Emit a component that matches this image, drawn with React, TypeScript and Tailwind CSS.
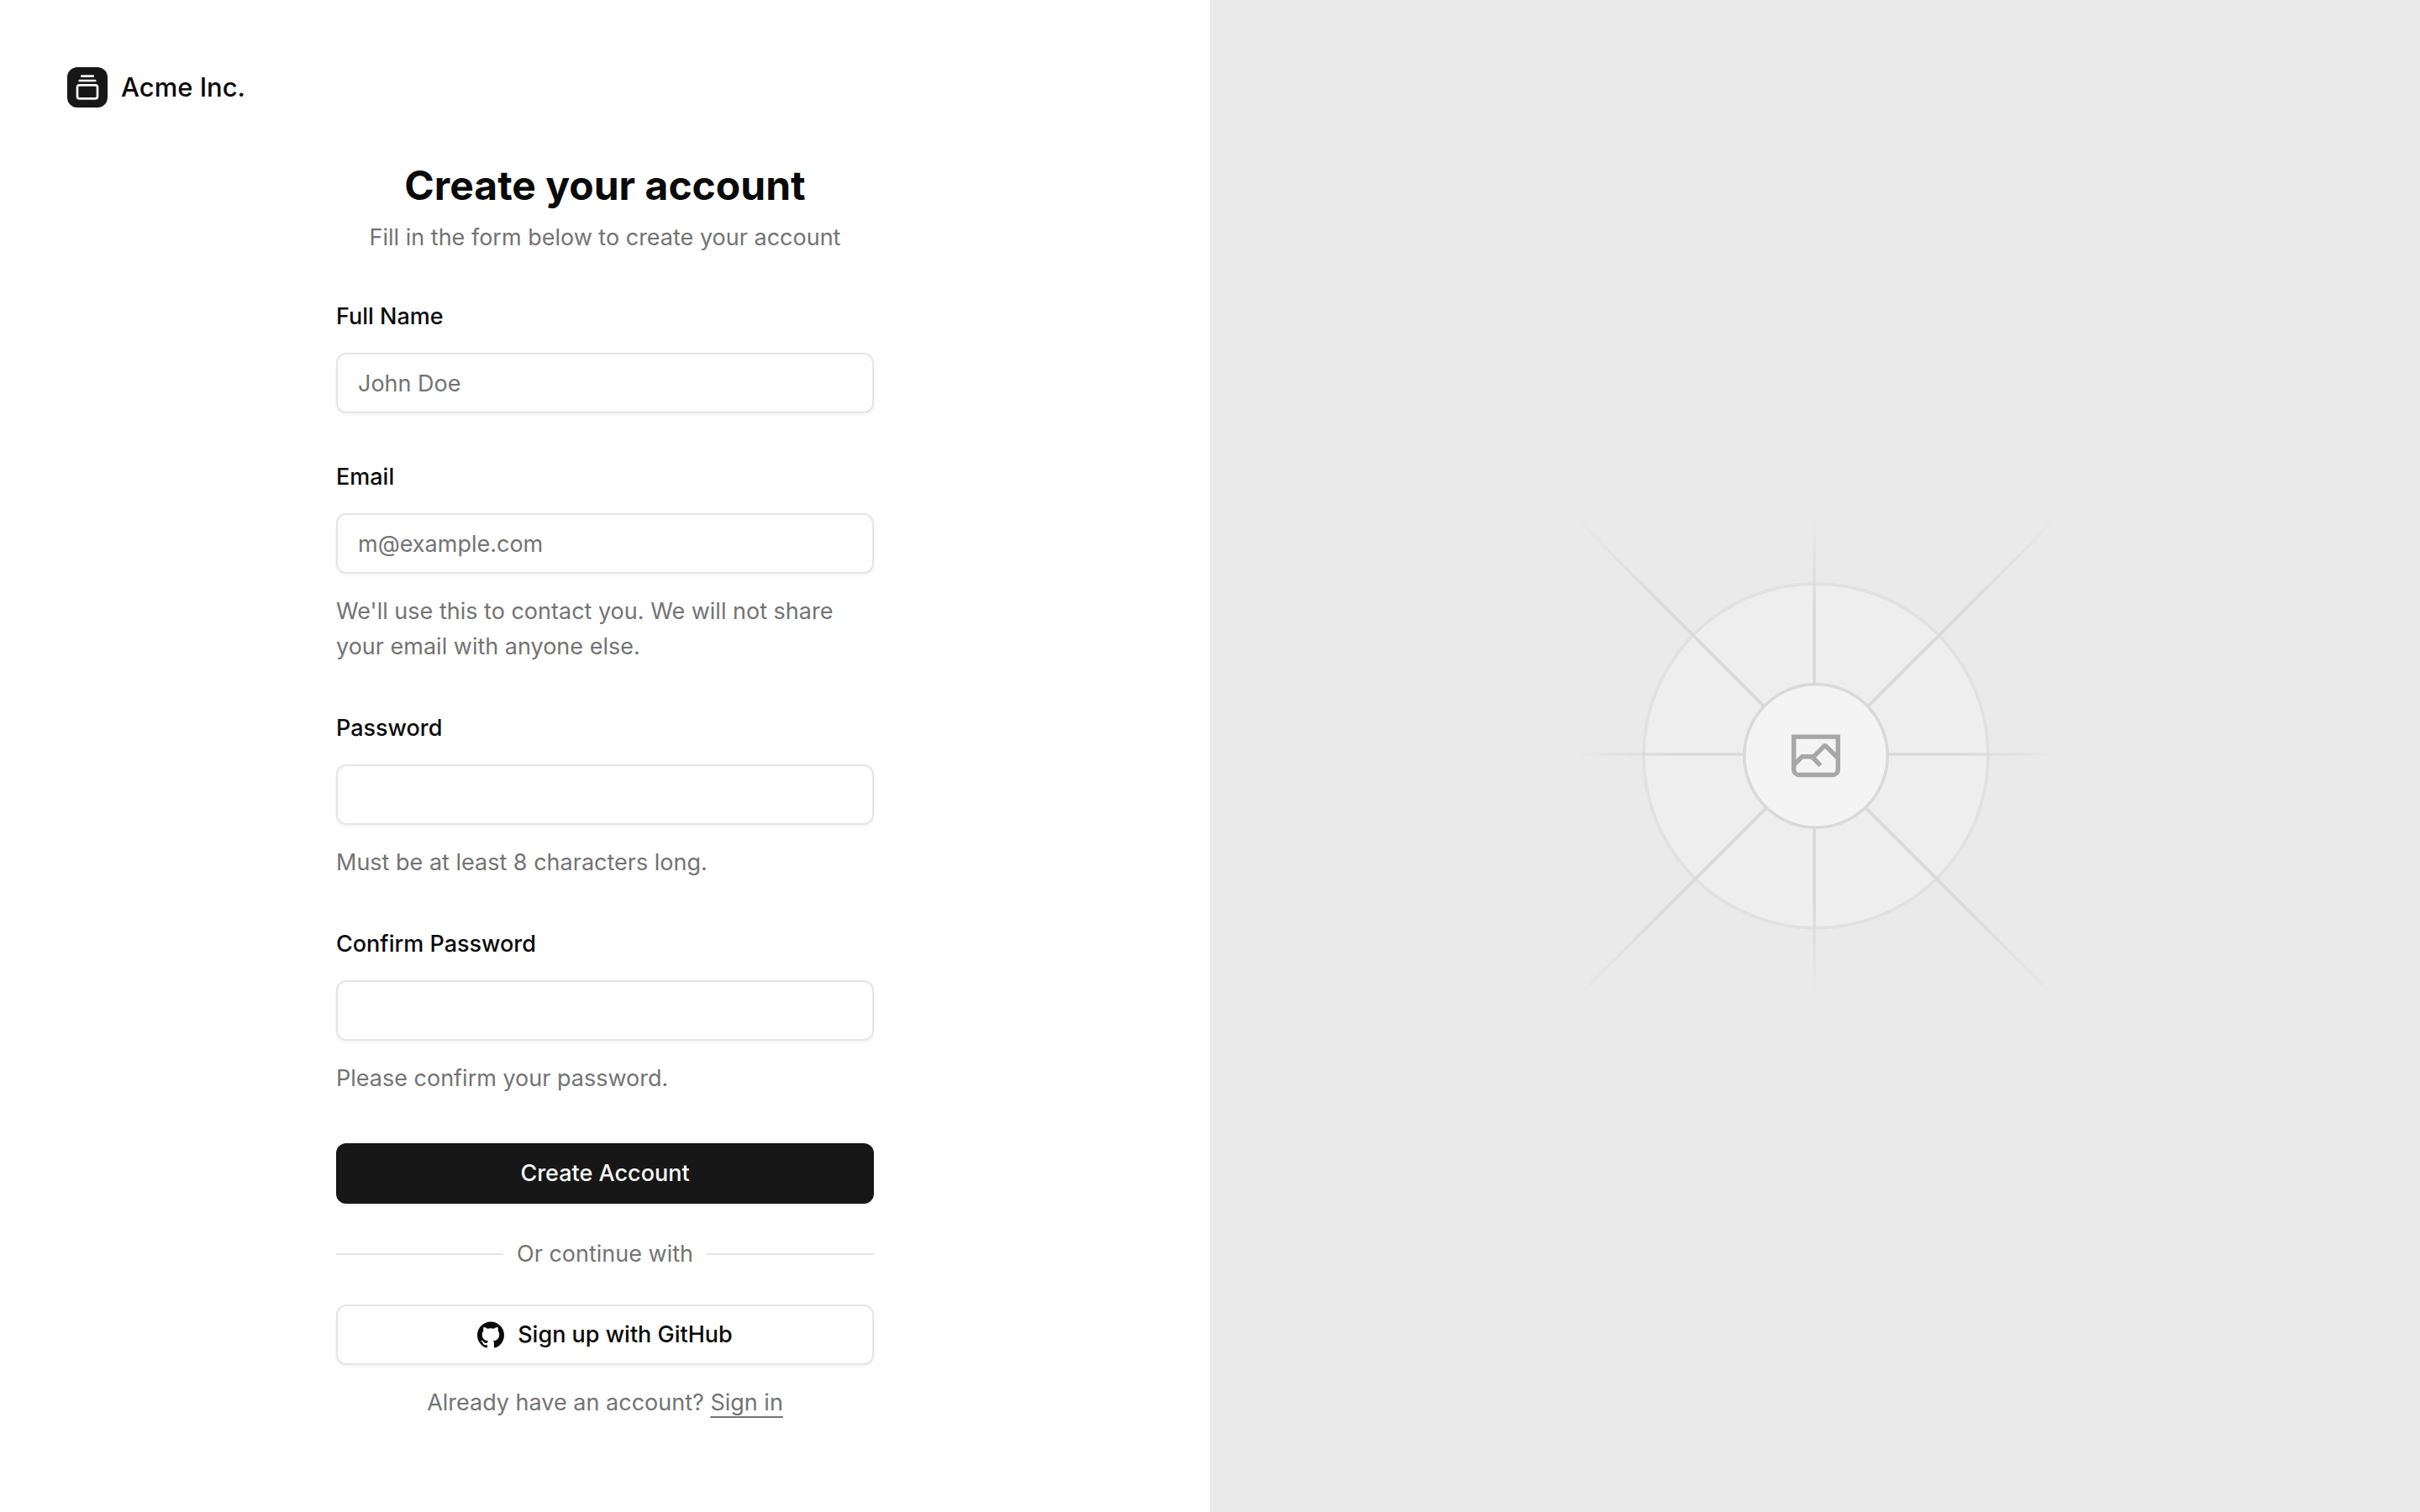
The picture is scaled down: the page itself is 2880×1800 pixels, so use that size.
import type { ComponentProps, ReactNode } from 'react'
import { GalleryVerticalEnd } from 'lucide-react'

function Field({ id, label, children, ...props }: { id: string; label: string; children?: ReactNode } & ComponentProps<'input'>) {
  return (
    <div className="flex flex-col gap-6">
      <label htmlFor={id} className="w-fit font-medium leading-[39px]">
        {label}
      </label>
      <input
        id={id}
        className="h-18 w-full rounded-[12px] border-2 border-neutral-200 px-6 shadow-[0_2px_4px_0_rgb(0_0_0/0.05)] outline-none placeholder:text-neutral-500 focus-visible:border-neutral-400"
        {...props}
      />
      {children && <p className="leading-[42px] text-neutral-500">{children}</p>}
    </div>
  )
}

function GitHubIcon() {
  return (
    <svg viewBox="0 0 24 24" className="size-8 shrink-0" fill="currentColor" aria-hidden="true">
      <path d="M12 .297c-6.63 0-12 5.373-12 12 0 5.303 3.438 9.8 8.205 11.385.6.113.82-.258.82-.577 0-.285-.01-1.04-.015-2.04-3.338.724-4.042-1.61-4.042-1.61C4.422 18.07 3.633 17.7 3.633 17.7c-1.087-.744.084-.729.084-.729 1.205.084 1.838 1.236 1.838 1.236 1.07 1.835 2.809 1.305 3.495.998.108-.776.417-1.305.76-1.605-2.665-.3-5.466-1.332-5.466-5.93 0-1.31.465-2.38 1.235-3.22-.135-.303-.54-1.523.105-3.176 0 0 1.005-.322 3.3 1.23.96-.267 1.98-.399 3-.405 1.02.006 2.04.138 3 .405 2.28-1.552 3.285-1.23 3.285-1.23.645 1.653.24 2.873.12 3.176.765.84 1.23 1.91 1.23 3.22 0 4.61-2.805 5.625-5.475 5.92.42.36.81 1.096.81 2.22 0 1.606-.015 2.896-.015 3.286 0 .315.21.69.825.57C20.565 22.092 24 17.592 24 12.297c0-6.627-5.373-12-12-12" />
    </svg>
  )
}

function SignupForm() {
  return (
    <form className="flex flex-col gap-14" onSubmit={(e) => e.preventDefault()}>
      <div className="flex flex-col items-center gap-3 text-center">
        <h1 className="text-[48px] font-bold leading-[64px]">Create your account</h1>
        <p className="leading-[36px] text-neutral-500">Fill in the form below to create your account</p>
      </div>

      <Field id="name" label="Full Name" type="text" placeholder="John Doe" />
      <Field id="email" label="Email" type="email" placeholder="m@example.com">
        We'll use this to contact you. We will not share your email with anyone else.
      </Field>
      <Field id="password" label="Password" type="password">
        Must be at least 8 characters long.
      </Field>
      <Field id="confirm-password" label="Confirm Password" type="password">
        Please confirm your password.
      </Field>

      <button
        type="submit"
        className="h-18 w-full rounded-[12px] bg-neutral-900 font-medium text-neutral-50 shadow-[0_2px_4px_0_rgb(0_0_0/0.05)]"
      >
        Create Account
      </button>

      {/* Separator */}
      <div className="-my-4 flex h-10 items-center gap-4">
        <div className="h-0.5 flex-1 bg-neutral-200" />
        <span className="text-neutral-500">Or continue with</span>
        <div className="h-0.5 flex-1 bg-neutral-200" />
      </div>

      <div className="flex flex-col gap-6">
        <button
          type="button"
          className="flex h-18 w-full items-center justify-center gap-4 rounded-[12px] border-2 border-neutral-200 bg-white font-medium shadow-[0_2px_4px_0_rgb(0_0_0/0.05)]"
        >
          <GitHubIcon />
          Sign up with GitHub
        </button>
        <p className="text-center leading-[42px] text-neutral-500">
          Already have an account?{' '}
          <a href="#" className="underline decoration-2 underline-offset-[7px]">
            Sign in
          </a>
        </p>
      </div>
    </form>
  )
}

function GradientStops() {
  return (
    <>
      <stop offset=".02" stopColor="#C9C9C9" stopOpacity="0" />
      <stop offset=".208" stopColor="#C9C9C9" />
      <stop offset=".792" stopColor="#C9C9C9" />
      <stop offset=".98" stopColor="#C9C9C9" stopOpacity="0" />
    </>
  )
}

function Placeholder() {
  return (
    <svg
      viewBox="0 0 1200 1200"
      preserveAspectRatio="xMidYMid slice"
      fill="none"
      className="absolute inset-0 h-full w-full"
      role="img"
      aria-label="Image"
    >
      <rect width="1200" height="1200" fill="#EAEAEA" />
      <g opacity=".5">
        <circle cx="600.709" cy="599.88" r="136.62" fill="#FAFAFA" stroke="#C9C9C9" strokeWidth="2.418" opacity=".5" />
        <path
          stroke="url(#ray-a)"
          strokeWidth="2.418"
          d="M0-1.209h553.581"
          transform="scale(1 -1) rotate(45 1163.11 91.165)"
        />
        <path stroke="url(#ray-b)" strokeWidth="2.418" d="M404.846 598.671h391.726" />
        <path stroke="url(#ray-c)" strokeWidth="2.418" d="M599.5 795.742V404.017" />
        <path stroke="url(#ray-d)" strokeWidth="2.418" d="m795.717 796.597-391.441-391.44" />
        <circle cx="600.709" cy="599.88" r="56.825" fill="#fff" />
        <path
          fill="#666"
          fillRule="evenodd"
          clipRule="evenodd"
          d="M616.426 586.58h-31.434v16.176l3.553-3.554.531-.531h9.068l.074-.074 8.463-8.463h2.565l7.18 7.181V586.58Zm-15.715 14.654 3.698 3.699 1.283 1.282-2.565 2.565-1.282-1.283-5.2-5.199h-6.066l-5.514 5.514-.073.073v2.876a2.418 2.418 0 0 0 2.418 2.418h26.598a2.418 2.418 0 0 0 2.418-2.418v-8.317l-8.463-8.463-7.181 7.181-.071.072Zm-19.347 5.442v4.085a6.045 6.045 0 0 0 6.046 6.045h26.598a6.044 6.044 0 0 0 6.045-6.045v-27.808h-38.689v23.723Z"
        />
        <circle cx="600.709" cy="599.88" r="56.825" stroke="#C9C9C9" strokeWidth="2.418" />
      </g>
      <defs>
        <linearGradient id="ray-a" x1="554.061" x2="-.48" y1=".083" y2=".087" gradientUnits="userSpaceOnUse">
          <GradientStops />
        </linearGradient>
        <linearGradient id="ray-b" x1="796.912" x2="404.507" y1="599.963" y2="599.965" gradientUnits="userSpaceOnUse">
          <GradientStops />
        </linearGradient>
        <linearGradient id="ray-c" x1="600.792" x2="600.794" y1="403.677" y2="796.082" gradientUnits="userSpaceOnUse">
          <GradientStops />
        </linearGradient>
        <linearGradient id="ray-d" x1="404.85" x2="796.972" y1="403.903" y2="796.02" gradientUnits="userSpaceOnUse">
          <GradientStops />
        </linearGradient>
      </defs>
    </svg>
  )
}

export default function App() {
  return (
    <div className="grid min-h-svh bg-white font-['Inter',sans-serif] text-[27px] text-neutral-950 lg:grid-cols-2">
      <div className="flex flex-col gap-8 p-20">
        <div className="flex">
          <a href="#" className="flex items-center gap-4 text-[31px] font-medium leading-[48px]">
            <div className="flex size-12 items-center justify-center rounded-[12px] bg-neutral-900 text-neutral-50">
              <GalleryVerticalEnd className="size-8" />
            </div>
            Acme Inc.
          </a>
        </div>
        <div className="flex flex-1 items-center justify-center">
          <div className="w-full max-w-[640px]">
            <SignupForm />
          </div>
        </div>
      </div>

      <div className="relative hidden bg-neutral-100 lg:block">
        <Placeholder />
      </div>
    </div>
  )
}
